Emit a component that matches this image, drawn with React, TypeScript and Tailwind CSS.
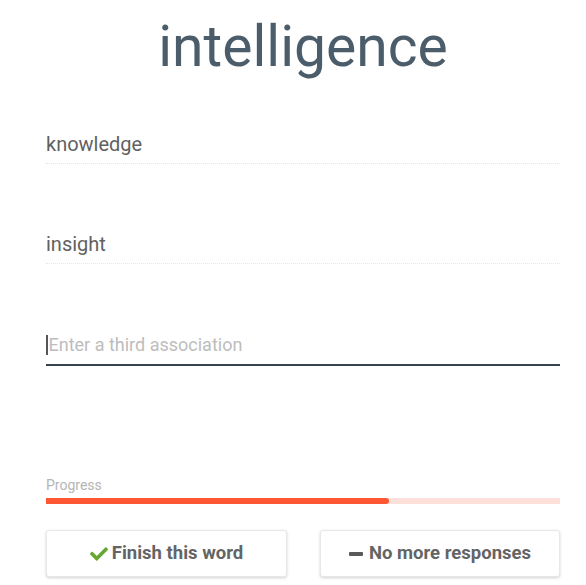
import React from "react";
import { FaCheck } from "react-icons/fa";

export default function App() {
  return (
    <div className="w-[586px] h-[585px] bg-white pl-[46px] pr-[26px] overflow-hidden" style={{ fontFamily: "Roboto, 'Noto Sans', sans-serif" }}>
      <div className="pt-[14px] text-center text-[57px] leading-[66px] text-[#4b5d6b]">intelligence</div>

      <div className="mt-[52px] pb-[7px] border-b border-dotted border-[#e6e6e6] text-[20px] leading-[24px] text-[#616161]">knowledge</div>
      <div className="mt-[68px] pb-[7px] border-b border-dotted border-[#e6e6e6] text-[20px] leading-[24px] text-[#616161]">insight</div>
      <div className="mt-[69px] pb-[7px] border-b-2 border-[#37434f] text-[18px] leading-[24px] text-[#bdbdbd] flex items-center">
        <span className="inline-block w-[1.5px] h-[20px] bg-[#555] mr-[1px]" />
        <span>Enter a third association</span>
      </div>

      <div className="mt-[111px] text-[14px] leading-[16px] text-[#b5b5b5]">Progress</div>
      <div className="mt-[5px] h-[6px] bg-[#fde0d9] w-full">
        <div className="h-full bg-[#ff5733] rounded-r-[3px]" style={{ width: "66.8%" }} />
      </div>

      <div className="mt-[26px] flex justify-between">
        <button className="w-[241px] h-[47px] rounded-[3px] border border-[#e8e8e8] bg-white shadow-[0_1px_3px_rgba(0,0,0,0.18)] flex items-center justify-center gap-[4px] text-[18.5px] font-bold text-[#646464]">
          <FaCheck className="text-[#64a832] w-[18px] h-[18px]" />
          <span>Finish this word</span>
        </button>
        <button className="w-[240px] h-[47px] rounded-[3px] border border-[#e8e8e8] bg-white shadow-[0_1px_3px_rgba(0,0,0,0.18)] flex items-center justify-center gap-[6px] text-[18.5px] font-bold text-[#646464]">
          <span className="inline-block w-[14px] h-[4px] rounded-[1px] bg-[#5a5a5a] mt-[1px]" />
          <span>No more responses</span>
        </button>
      </div>
    </div>
  );
}
